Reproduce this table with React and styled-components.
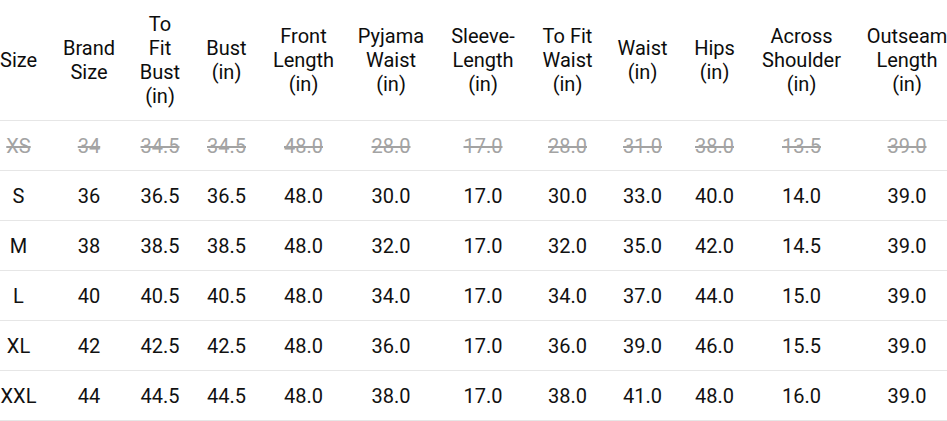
import React from 'react';
import styled, { createGlobalStyle } from 'styled-components';

const GlobalStyle = createGlobalStyle`
  html, body {
    margin: 0;
    padding: 0;
    background: #ffffff;
  }
  body {
    font-family: Roboto, "Liberation Sans", sans-serif;
  }
`;

const columns = [
  { key: 'size', label: ['Size'], width: 50 },
  { key: 'brand', label: ['Brand', 'Size'], width: 78 },
  { key: 'toFitBust', label: ['To', 'Fit', 'Bust', '(in)'], width: 64 },
  { key: 'bust', label: ['Bust', '(in)'], width: 69 },
  { key: 'front', label: ['Front', 'Length', '(in)'], width: 85 },
  { key: 'pyjama', label: ['Pyjama', 'Waist', '(in)'], width: 90 },
  { key: 'sleeve', label: ['Sleeve-', 'Length', '(in)'], width: 94 },
  { key: 'toFitWaist', label: ['To Fit', 'Waist', '(in)'], width: 75 },
  { key: 'waist', label: ['Waist', '(in)'], width: 75 },
  { key: 'hips', label: ['Hips', '(in)'], width: 69 },
  { key: 'across', label: ['Across', 'Shoulder', '(in)'], width: 105 },
  { key: 'outseam', label: ['Outseam', 'Length', '(in)'], width: 106 },
];

const rows = [
  { values: ['XS', '34', '34.5', '34.5', '48.0', '28.0', '17.0', '28.0', '31.0', '38.0', '13.5', '39.0'], soldOut: true },
  { values: ['S', '36', '36.5', '36.5', '48.0', '30.0', '17.0', '30.0', '33.0', '40.0', '14.0', '39.0'] },
  { values: ['M', '38', '38.5', '38.5', '48.0', '32.0', '17.0', '32.0', '35.0', '42.0', '14.5', '39.0'] },
  { values: ['L', '40', '40.5', '40.5', '48.0', '34.0', '17.0', '34.0', '37.0', '44.0', '15.0', '39.0'] },
  { values: ['XL', '42', '42.5', '42.5', '48.0', '36.0', '17.0', '36.0', '39.0', '46.0', '15.5', '39.0'] },
  { values: ['XXL', '44', '44.5', '44.5', '48.0', '38.0', '17.0', '38.0', '41.0', '48.0', '16.0', '39.0'] },
];

const Wrapper = styled.div`
  width: 947px;
  height: 421px;
  overflow: hidden;
  background: #ffffff;
`;

const Table = styled.table`
  border-collapse: collapse;
  table-layout: fixed;
  width: 960px;
  font-size: 20px;
  line-height: 24px;
  color: #111111;
`;

const Col = styled.col`
  width: ${p => p.$width}px;
`;

const HeadCell = styled.th`
  font-weight: 400;
  text-align: center;
  vertical-align: middle;
  white-space: nowrap;
  height: 96px;
  padding: 12px 0;
  border-bottom: 1px solid #e6e6e6;
  color: #0d0d0d;
  &:first-child {
    text-align: left;
  }
`;

const HeadLine = styled.span`
  display: block;
`;

const Cell = styled.td`
  text-align: center;
  vertical-align: middle;
  white-space: nowrap;
  height: 49px;
  padding: 0;
  border-bottom: 1px solid #e6e6e6;
  color: ${p => (p.$muted ? '#a3a3a3' : '#111111')};
  text-decoration: ${p => (p.$muted ? 'line-through' : 'none')};
  &:first-child {
    text-align: left;
  }
`;

const FirstInner = styled.span`
  display: inline-block;
  width: 37px;
  text-align: center;
  text-decoration: ${p => (p.$muted ? 'line-through' : 'none')};
`;

function SizeChart() {
  return (
    <Wrapper>
      <Table>
        <colgroup>
          {columns.map(c => (
            <Col key={c.key} $width={c.width} />
          ))}
        </colgroup>
        <thead>
          <tr>
            {columns.map((c, i) => (
              <HeadCell key={c.key}>
                {i === 0 ? (
                  <FirstInner>{c.label[0]}</FirstInner>
                ) : (
                  c.label.map(line => <HeadLine key={line}>{line}</HeadLine>)
                )}
              </HeadCell>
            ))}
          </tr>
        </thead>
        <tbody>
          {rows.map(row => (
            <tr key={row.values[0]}>
              {row.values.map((v, i) => (
                <Cell key={columns[i].key} $muted={row.soldOut}>
                  {i === 0 ? <FirstInner $muted={row.soldOut}>{v}</FirstInner> : v}
                </Cell>
              ))}
            </tr>
          ))}
        </tbody>
      </Table>
    </Wrapper>
  );
}

export default function App() {
  return (
    <>
      <GlobalStyle />
      <SizeChart />
    </>
  );
}
